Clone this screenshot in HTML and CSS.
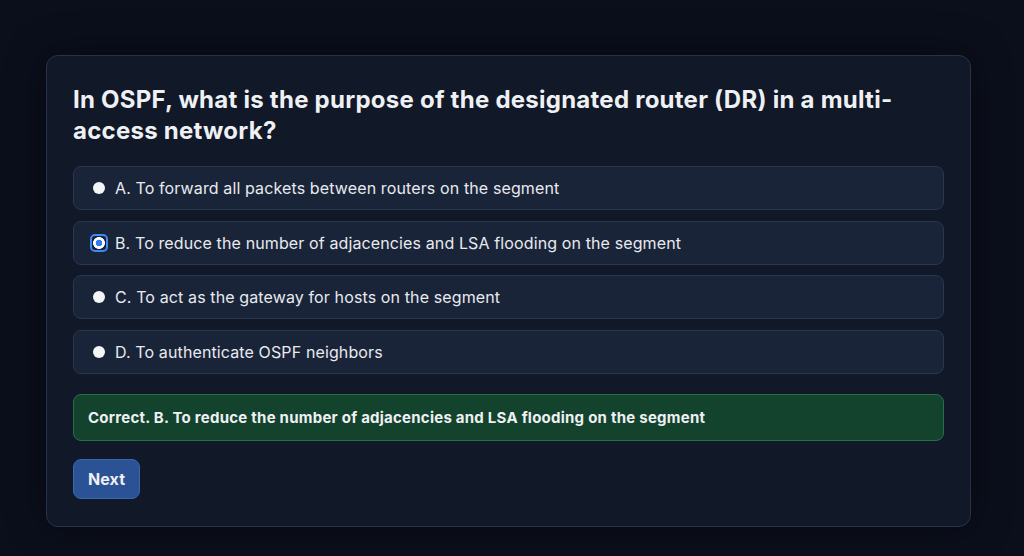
FILE: index.html
```html
<!DOCTYPE html>
<html lang="en">

<head>
  <meta charset="UTF-8" />
  <meta name="viewport" content="width=device-width, initial-scale=1.0" />
  <title>OSPF Quiz</title>
  <link rel="stylesheet" href="styles.css">
</head>

<body>
  <div class="page">
    <div class="card">
      <h2 class="question">In OSPF, what is the purpose of the designated router (DR) in a multi-access network?</h2>

      <div class="options">
        <label class="option">
          <input type="radio" name="q" class="radio">
          <span>A. To forward all packets between routers on the segment</span>
        </label>
        <label class="option">
          <input type="radio" name="q" class="radio focused" checked>
          <span>B. To reduce the number of adjacencies and LSA flooding on the segment</span>
        </label>
        <label class="option">
          <input type="radio" name="q" class="radio">
          <span>C. To act as the gateway for hosts on the segment</span>
        </label>
        <label class="option">
          <input type="radio" name="q" class="radio">
          <span>D. To authenticate OSPF neighbors</span>
        </label>
      </div>

      <div class="feedback">Correct. B. To reduce the number of adjacencies and LSA flooding on the segment</div>

      <button class="next">Next</button>
    </div>
  </div>
</body>

</html>
```

FILE: styles.css
```css
html,
body {
  background: var(--page);
  margin: 0;
  padding: 0;
}

:root {
  --page: #0b0f1c;
  --card: #111827;
  --card-border: #283349;
  --option: #1a2439;
  --option-border: #2b3750;
  --text: #e8eaee;
  --green: #14432d;
  --green-border: #247048;
  --blue: #2a5294;
  --blue-border: #3b67ad;
}

.page {
  padding: 55px 53px 30px 46px;
  font-family: Inter, 'Noto Sans', sans-serif;
  color: var(--text);
}

.card {
  background: var(--card);
  border: 1px solid var(--card-border);
  border-radius: 12px;
  padding: 28px 26px 27px 26px;
  box-shadow: 0 0 40px rgba(0, 0, 0, 0.45);
}

.question {
  margin: 0 0 20px 0;
  font-size: 24px;
  line-height: 31px;
  font-weight: 700;
  letter-spacing: 0.25px;
  color: #eef0f4;
}

.options {
  display: flex;
  flex-direction: column;
  gap: 10.5px;
}

.option {
  display: flex;
  align-items: center;
  height: 42px;
  padding: 0 14px 0 19px;
  background: var(--option);
  border: 1px solid var(--option-border);
  border-radius: 8px;
  font-size: 16px;
  letter-spacing: 0.12px;
  cursor: pointer;
}

.radio {
  appearance: none;
  -webkit-appearance: none;
  width: 12px;
  height: 12px;
  margin: 0 10px 0 0;
  border-radius: 50%;
  background: #f4f5f7;
  flex-shrink: 0;
}

.radio:checked {
  width: 18px;
  height: 18px;
  margin: 0 7px 0 -3px;
  border-radius: 5px;
  border: 2px solid #4187f2;
  background: radial-gradient(circle, #2f7bf5 0 3px, #ffffff 3.6px 5.6px, #17223a 6.2px);
}

.feedback {
  margin-top: 20px;
  padding: 13px 14px;
  background: var(--green);
  border: 1px solid var(--green-border);
  border-radius: 8px;
  font-size: 15px;
  line-height: 19px;
  font-weight: 700;
  letter-spacing: 0.24px;
  color: #eef0f4;
}

.next {
  margin-top: 18px;
  padding: 10px 14px 9px 14px;
  background: var(--blue);
  border: 1px solid var(--blue-border);
  border-radius: 8px;
  color: #eef0f4;
  font-family: Inter, 'Noto Sans', sans-serif;
  font-size: 16px;
  line-height: 19px;
  font-weight: 700;
  letter-spacing: 0.1px;
  cursor: pointer;
}
```
